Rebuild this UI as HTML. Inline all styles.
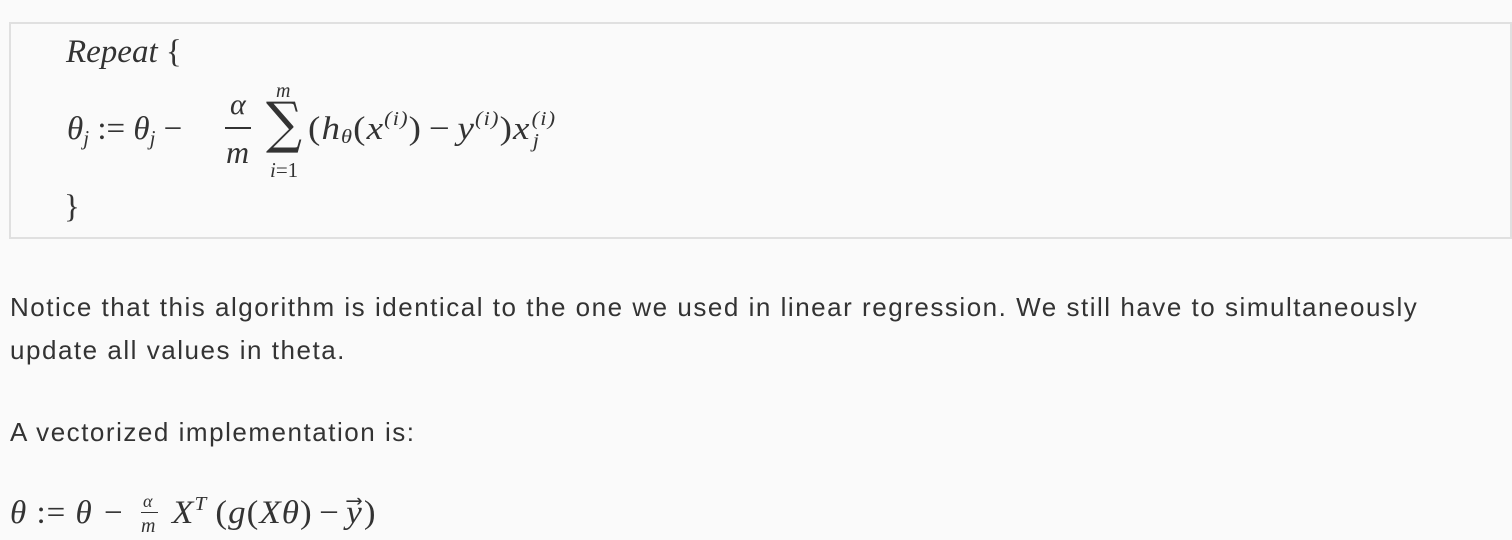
<!DOCTYPE html>
<html><head><style>
body{margin:0;width:1512px;height:540px;background:#fafafa;overflow:hidden;position:relative;color:#333;}
.m{position:absolute;font-family:"Liberation Serif",serif;font-size:33px;color:#333;white-space:nowrap;line-height:1;}
i{font-style:italic}
.box{position:absolute;left:9px;top:22px;width:1499px;height:213px;border:2px solid #e0e0e0;}
.t{position:absolute;left:10px;font-family:"Liberation Sans",sans-serif;font-size:26px;letter-spacing:1.52px;color:#333;white-space:nowrap;}
.sp{display:inline-block;font-size:20px;position:relative;top:-14px;}
.sb{display:inline-block;font-size:21px;position:relative;top:6px;}
.st{display:inline-block;position:relative;width:22px;height:10px;}
.st span{position:absolute;left:1px;font-size:20px;}
.o{margin:0 6px}
</style></head><body>
<div class="box"></div>
<div class="m" style="left:66px;top:36px"><i>Repeat</i> {</div>
<div class="m" style="left:67px;top:113px"><i>θ</i><span class="sb"><i>j</i></span> := <i>θ</i><span class="sb"><i>j</i></span> −</div>
<div class="m" style="left:230px;top:90px;font-size:30px"><i>α</i></div>
<div style="position:absolute;left:225px;top:127px;width:26px;height:2px;background:#333"></div>
<div class="m" style="left:226px;top:136px;font-size:32px"><i>m</i></div>
<div class="m" style="left:276px;top:81px;font-size:20px"><i>m</i></div>
<div class="m" style="left:266px;top:96px;font-size:56px;font-family:'DejaVu Serif',serif;transform:scaleX(0.9);transform-origin:left">∑</div>
<div class="m" style="left:270px;top:160px;font-size:21px"><i>i</i>=1</div>
<div class="m" style="left:308px;top:113px;transform:scaleX(1.12);transform-origin:left;letter-spacing:1px">(<i>h</i><span class="sb" style="font-size:20px;top:4px"><i>θ</i></span>(<i>x</i><span class="sp"><i>(i)</i></span>)<span class="o">−</span><i>y</i><span class="sp"><i>(i)</i></span>)<i>x</i><span class="st"><span style="top:-20px"><i>(i)</i></span><span style="top:2px;left:2px"><i>j</i></span></span></div>
<div class="m" style="left:64px;top:191px">}</div>
<div class="t" style="top:292px">Notice that this algorithm is identical to the one we used in linear regression. We still have to simultaneously</div>
<div class="t" style="top:335px">update all values in theta.</div>
<div class="t" style="top:417px">A vectorized implementation is:</div>
<div class="m" style="left:10px;top:497px;letter-spacing:1px"><i>θ</i> := <i>θ</i> <span style="margin-left:2px">−</span></div>
<div class="m" style="left:143px;top:492px;font-size:18px"><i>α</i></div>
<div style="position:absolute;left:141px;top:512px;width:17px;height:1px;background:#333"></div>
<div class="m" style="left:141px;top:516px;font-size:20px"><i>m</i></div>
<div class="m" style="left:172px;top:497px;letter-spacing:1px;transform:scaleX(1.06);transform-origin:left"><i>X</i><span class="sp" style="top:-13px"><i>T</i></span>&thinsp;(<i>g</i>(<i>Xθ</i>)<span class="o">−</span><i>y</i>⃗)</div>
</body></html>
